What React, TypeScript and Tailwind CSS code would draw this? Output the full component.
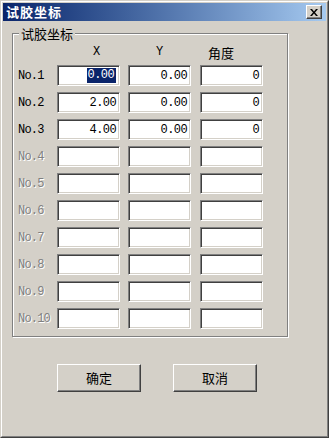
import React from "react";

const cjk = "font-['SimSun','Noto_Sans_CJK_SC',sans-serif]";
const mono = "font-['Liberation_Mono','Noto_Sans_CJK_SC',monospace]";

type Row = { x: string; y: string; a: string; enabled: boolean };

const rows: Row[] = [
  { x: "0.00", y: "0.00", a: "0", enabled: true },
  { x: "2.00", y: "0.00", a: "0", enabled: true },
  { x: "4.00", y: "0.00", a: "0", enabled: true },
  ...Array.from({ length: 7 }, () => ({ x: "", y: "", a: "", enabled: false })),
];

const Field = ({
  value,
  selected,
  className = "",
}: {
  value: string;
  selected?: boolean;
  className?: string;
}) => (
  <div
    className={`w-[63px] h-[21px] bg-white border border-t-[#808080] border-l-[#808080] border-r-white border-b-white shadow-[inset_1px_1px_0_#404040,inset_-1px_-1px_0_#d4d0c8] flex items-center justify-end pr-[3px] text-[12px] tracking-[-0.6px] text-black ${mono} ${className}`}
  >
    {selected ? (
      <span className="bg-[#0a246a] text-white leading-[15px] pl-px pr-[2px]">{value}</span>
    ) : (
      <span>{value}</span>
    )}
  </div>
);

const Button = ({ label, className = "" }: { label: string; className?: string }) => (
  <button
    className={`w-[84px] h-[28px] bg-[#d4d0c8] border border-t-white border-l-white border-r-[#404040] border-b-[#404040] shadow-[inset_-1px_-1px_0_#808080] text-[13px] text-black ${cjk} ${className}`}
  >
    {label}
  </button>
);

export default function App() {
  return (
    <div className="w-[329px] h-[438px] bg-[#d4d0c8] border border-t-[#d4d0c8] border-l-[#d4d0c8] border-r-[#404040] border-b-[#404040]">
      <div className="h-full border border-t-white border-l-white border-r-[#808080] border-b-[#808080] p-px flex flex-col">
        {/* title bar */}
        <div className="h-[18px] flex items-start justify-between bg-gradient-to-r from-[#0a246a] to-[#a6caf0]">
          <span className={`pl-[3px] leading-[18px] text-[13px] font-bold text-white tracking-[1px] ${cjk}`}>
            试胶坐标
          </span>
          <div className="mt-[2px] mr-[4px] w-[16px] h-[14px] bg-[#d4d0c8] border border-t-white border-l-white border-r-[#404040] border-b-[#404040] shadow-[inset_-1px_-1px_0_#808080] flex items-center justify-center">
            <svg width="8" height="7" viewBox="0 0 8 7">
              <path d="M0 0h2l2 2.5L6 0h2L5 3.5 8 7H6L4 4.5 2 7H0l3-3.5z" fill="#000" />
            </svg>
          </div>
        </div>

        {/* group box */}
        <div className="relative ml-[9px] mt-[12px] w-[276px] h-[304px] border border-[#808080] shadow-[1px_1px_0_#fff,inset_1px_1px_0_#fff] pt-[12px] pl-[5px]">
          <span className={`absolute left-[6px] -top-[8px] px-[2px] bg-[#d4d0c8] text-[13px] leading-[15px] text-black ${cjk}`}>
            试胶坐标
          </span>

          <div className="flex h-[19px] items-start text-[12px] leading-[13px] text-black">
            <div className="w-[39px]" />
            <div className={`w-[63px] pl-[36px] ${mono}`}>X</div>
            <div className={`ml-[8px] w-[63px] pl-[28px] ${mono}`}>Y</div>
            <div className={`ml-[9px] w-[63px] pl-[8px] text-[13px] ${cjk}`}>角度</div>
          </div>

          <div className="flex flex-col gap-[6px]">
            {rows.map((r, i) => (
              <div key={i} className="flex items-center h-[21px]">
                <div
                  className={`w-[39px] text-[12px] tracking-[-0.8px] ${mono} ${
                    r.enabled ? "text-black" : "text-[#808080] [text-shadow:1px_1px_0_#fff]"
                  }`}
                >
                  No.{i + 1}
                </div>
                <Field value={r.x} selected={i === 0} />
                <Field value={r.y} className="ml-[8px]" />
                <Field value={r.a} className="ml-[9px]" />
              </div>
            ))}
          </div>
        </div>

        {/* buttons */}
        <div className="flex mt-[27px] ml-[54px] gap-[32px]">
          <Button label="确定" />
          <Button label="取消" />
        </div>
      </div>
    </div>
  );
}
